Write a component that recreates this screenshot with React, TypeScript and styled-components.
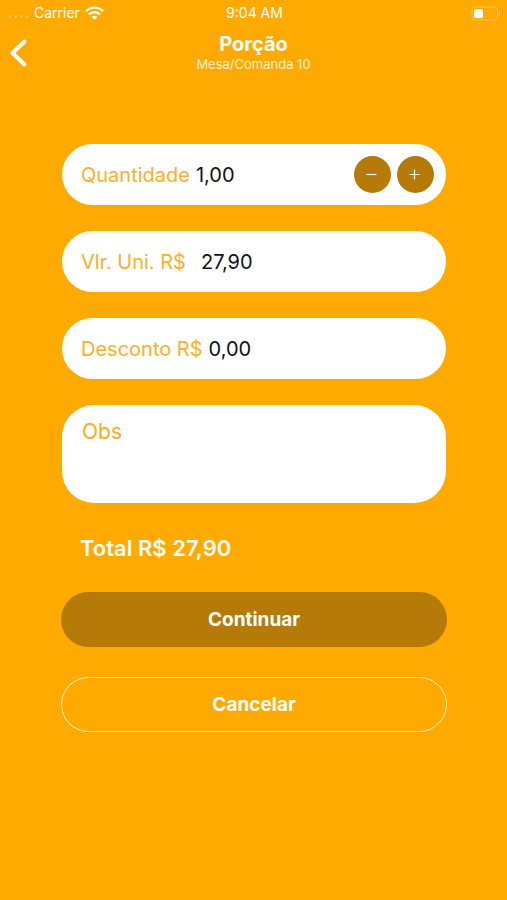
import React, { useState } from "react";
import styled, { createGlobalStyle } from "styled-components";

const GlobalStyle = createGlobalStyle`
  * {
    box-sizing: border-box;
  }
  body {
    margin: 0;
    background: #ffaa01;
    font-family: Inter, "Liberation Sans", sans-serif;
    color: #fff;
  }
  button, input, textarea {
    font: inherit;
  }
`;

const Screen = styled.div`
  min-height: 100vh;
`;

const StatusBar = styled.div`
  display: grid;
  grid-template-columns: 1fr auto 1fr;
  align-items: center;
  height: 26px;
  padding: 0 6px 0 8px;
  font-size: 14px;
  line-height: 16px;
`;

const StatusSide = styled.div<{ $end?: boolean }>`
  display: flex;
  align-items: center;
  justify-content: ${(p) => (p.$end ? "flex-end" : "flex-start")};
  gap: 5px;
`;

const Header = styled.header`
  display: grid;
  grid-template-columns: 36px 1fr 36px;
  align-items: center;
  height: 54px;
`;

const BackButton = styled.button`
  display: flex;
  align-items: center;
  height: 44px;
  padding: 0 0 0 8px;
  border: 0;
  background: none;
  color: #fff;
  cursor: pointer;
`;

const Heading = styled.div`
  padding-bottom: 2px;
  text-align: center;
`;

const Title = styled.h1`
  margin: 0;
  font-size: 20px;
  line-height: 24px;
  font-weight: 700;
`;

const Subtitle = styled.p`
  margin: 0;
  font-size: 13px;
  line-height: 16px;
  color: #fff0cc;
`;

const Form = styled.form`
  display: flex;
  flex-direction: column;
  padding: 64px 60px 32px 61px;
`;

const Fields = styled.div`
  display: flex;
  flex-direction: column;
  gap: 26px;
  padding: 0 1px;
`;

const Field = styled.div<{ $gap?: number }>`
  display: flex;
  align-items: center;
  gap: ${(p) => p.$gap ?? 6}px;
  height: 61px;
  padding: 0 12px 0 19px;
  border-radius: 31px;
  background: #fff;
  font-size: 20px;
  line-height: 24px;
`;

const Label = styled.label`
  flex: none;
  color: #fbb02a;
`;

const Value = styled.input`
  flex: 1;
  min-width: 0;
  height: 32px;
  padding: 0;
  border: 0;
  outline: 0;
  background: none;
  color: #111;
`;

const Stepper = styled.div`
  display: flex;
  gap: 6px;
`;

const StepButton = styled.button`
  display: grid;
  place-items: center;
  width: 37px;
  height: 37px;
  padding: 0 2px 0 0;
  border: 0;
  border-radius: 50%;
  background: #b57a08;
  color: #fff;
  cursor: pointer;
`;

const Notes = styled.textarea`
  display: block;
  width: 100%;
  height: 98px;
  padding: 15px 20px;
  border: 0;
  border-radius: 32px;
  outline: 0;
  resize: none;
  background: #fff;
  color: #111;
  font-size: 21px;
  line-height: 24px;

  &::placeholder {
    color: #fbab1c;
    opacity: 1;
  }
`;

const Total = styled.p`
  margin: 32px 19px 31px;
  font-size: 22px;
  line-height: 26px;
  font-weight: 600;
`;

const Actions = styled.div`
  display: flex;
  flex-direction: column;
  gap: 30px;
`;

const ActionButton = styled.button<{ $outlined?: boolean }>`
  height: 55px;
  border: ${(p) => (p.$outlined ? "1px solid #fff0c8" : "0")};
  border-radius: 28px;
  background: ${(p) => (p.$outlined ? "transparent" : "#b57a08")};
  color: #fff;
  font-size: 19px;
  line-height: 24px;
  font-weight: 700;
  cursor: pointer;
`;

const SignalIcon = () => (
  <svg width="21" height="10" viewBox="0 0 21 10" fill="#ffc64f" aria-hidden="true">
    <circle cx="2" cy="8.5" r="1.3" />
    <circle cx="7.6" cy="8.5" r="1.3" />
    <circle cx="13.2" cy="8.5" r="1.3" />
    <circle cx="18.8" cy="8.5" r="1.3" />
  </svg>
);

const WifiIcon = () => (
  <svg width="19" height="14" viewBox="0 0 19 14" fill="none" stroke="#fff" strokeWidth="2.3" aria-hidden="true">
    <path d="M1 5.2C5.8.3 13.2.3 18 5.2" />
    <path d="M4 8.4c3.1-3.1 7.9-3.1 11 0" />
    <path d="M9.5 13.8 6.6 10.9c1.6-1.6 4.2-1.6 5.8 0Z" fill="#fff" stroke="none" />
  </svg>
);

const BatteryIcon = () => (
  <svg width="30" height="15" viewBox="0 0 30 15" aria-hidden="true">
    <rect x="1" y="1" width="25.5" height="13" rx="3" fill="none" stroke="#ffc655" />
    <rect x="3" y="3" width="9" height="9" rx="1.5" fill="#fff" />
    <path d="M28 5.2v4.6c2-.8 2-3.8 0-4.6Z" fill="#ffc655" />
  </svg>
);

const BackIcon = () => (
  <svg width="20" height="30" viewBox="0 0 20 30" fill="none" stroke="currentColor" strokeWidth="4" strokeLinecap="round" strokeLinejoin="round" aria-hidden="true">
    <path d="M16.5 3.5 4.5 15l12 11.5" />
  </svg>
);

const StepIcon = ({ plus }: { plus?: boolean }) => (
  <svg width="11" height="11" viewBox="0 0 11 11" stroke="currentColor" strokeWidth="1.2" aria-hidden="true">
    <path d={plus ? "M.5 5.5h10M5.5.5v10" : "M.5 5.5h10"} />
  </svg>
);

const format = (value: number) => value.toFixed(2).replace(".", ",");
const parse = (text: string) => Number(text.replace(",", ".")) || 0;

export default function App() {
  const [quantity, setQuantity] = useState("1,00");
  const [price, setPrice] = useState("27,90");
  const [discount, setDiscount] = useState("0,00");
  const total = parse(quantity) * parse(price) - parse(discount);
  const step = (amount: number) => setQuantity(format(Math.max(0, parse(quantity) + amount)));

  return (
    <Screen>
      <GlobalStyle />
      <StatusBar>
        <StatusSide>
          <SignalIcon />
          <span>Carrier</span>
          <WifiIcon />
        </StatusSide>
        <span>9:04 AM</span>
        <StatusSide $end>
          <BatteryIcon />
        </StatusSide>
      </StatusBar>
      <Header>
        <BackButton type="button" aria-label="Voltar">
          <BackIcon />
        </BackButton>
        <Heading>
          <Title>Porção</Title>
          <Subtitle>Mesa/Comanda 10</Subtitle>
        </Heading>
      </Header>
      <Form onSubmit={(e) => e.preventDefault()}>
        <Fields>
          <Field>
            <Label htmlFor="quantity">Quantidade</Label>
            <Value id="quantity" inputMode="decimal" value={quantity} onChange={(e) => setQuantity(e.target.value)} />
            <Stepper>
              <StepButton type="button" aria-label="Diminuir" onClick={() => step(-1)}>
                <StepIcon />
              </StepButton>
              <StepButton type="button" aria-label="Aumentar" onClick={() => step(1)}>
                <StepIcon plus />
              </StepButton>
            </Stepper>
          </Field>
          <Field $gap={15}>
            <Label htmlFor="price">Vlr. Uni. R$</Label>
            <Value id="price" inputMode="decimal" value={price} onChange={(e) => setPrice(e.target.value)} />
          </Field>
          <Field>
            <Label htmlFor="discount">Desconto R$</Label>
            <Value id="discount" inputMode="decimal" value={discount} onChange={(e) => setDiscount(e.target.value)} />
          </Field>
          <Notes aria-label="Obs" placeholder="Obs" />
        </Fields>
        <Total>Total R$ {format(total)}</Total>
        <Actions>
          <ActionButton type="submit">Continuar</ActionButton>
          <ActionButton type="button" $outlined>
            Cancelar
          </ActionButton>
        </Actions>
      </Form>
    </Screen>
  );
}
